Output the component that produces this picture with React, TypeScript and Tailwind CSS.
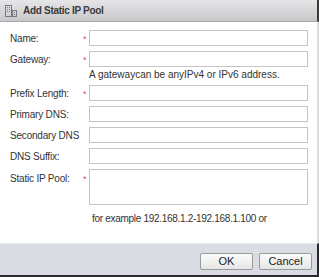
const rows = [
  { label: "Name:", required: true },
  { label: "Gateway:", required: true, hint: "A gatewaycan be anyIPv4 or IPv6 address." },
  { label: "Prefix Length:", required: true },
  { label: "Primary DNS:" },
  { label: "Secondary DNS" },
  { label: "DNS Suffix:" },
]

function PoolIcon() {
  return (
    <svg width="12" height="12" viewBox="0 0 12 12" className="shrink-0">
      <rect x="0.5" y="0.5" width="6" height="11" fill="none" stroke="#747a86" />
      <rect x="2" y="2" width="1" height="1" fill="#747a86" />
      <rect x="4" y="2" width="1" height="1" fill="#747a86" />
      <rect x="2" y="4" width="1" height="1" fill="#747a86" />
      <rect x="4" y="4" width="1" height="1" fill="#747a86" />
      <rect x="2" y="6" width="1" height="1" fill="#747a86" />
      <rect x="4" y="6" width="1" height="1" fill="#747a86" />
      <rect x="7.5" y="5.5" width="4" height="6" fill="none" stroke="#747a86" />
      <rect x="9" y="7" width="1" height="1" fill="#747a86" />
      <rect x="9" y="9" width="1" height="1" fill="#747a86" />
    </svg>
  )
}

function Star({ show, top }: { show?: boolean; top?: boolean }) {
  return (
    <span
      className={`w-[6px] shrink-0 text-[9px] leading-[9px] text-[#e05050] ${top ? "mt-[6px] self-start" : "mt-[3px]"}`}
    >
      {show ? "*" : ""}
    </span>
  )
}

export default function App() {
  return (
    <div
      className="flex h-[277px] w-[319px] flex-col bg-white text-[#333]"
      style={{ fontFamily: '"Liberation Sans", Arial, sans-serif' }}
    >
      <div className="flex h-[22px] shrink-0 items-center gap-[6px] border-b border-r-2 border-b-[#a8a8aa] border-r-[#3a3a3a] bg-gradient-to-b from-[#e6e6e8] to-[#c8c8ca] pl-[5px]">
        <PoolIcon />
        <span className="text-[10px] font-bold tracking-[-0.3px] text-[#3a3a3a]">Add Static IP Pool</span>
      </div>

      <div className="flex flex-1 flex-col border-r-2 border-r-[#dcdcdc] pl-[10px] pr-[9px] pt-[8px] text-[10px] tracking-[-0.2px]">
        <div className="flex flex-col gap-[5px]">
          {rows.map((r) => (
            <div key={r.label}>
              <div className="flex h-[16px] items-center">
                <span className="w-[73px] shrink-0">{r.label}</span>
                <Star show={r.required} />
                <div className="h-[16px] flex-1 border border-[#c4c4c4] bg-white" />
              </div>
              {r.hint ? (
                <div className="mb-[-1px] ml-[79px] mt-[1px] h-[13px] leading-[13px] tracking-normal">{r.hint}</div>
              ) : null}
            </div>
          ))}
          <div className="flex h-[36px]">
            <span className="mt-[2px] w-[73px] shrink-0">Static IP Pool:</span>
            <Star show top />
            <div className="h-[36px] flex-1 border border-[#c4c4c4] bg-white" />
          </div>
        </div>
        <div className="ml-[82px] mt-[7px] h-[13px] leading-[13px] tracking-[-0.3px]">
          for example 192.168.1.2-192.168.1.100 or
        </div>
      </div>

      <div className="flex h-[34px] shrink-0 items-start justify-end gap-[6px] border-b-2 border-r-2 border-[#2a2a2a] border-t border-t-[#e4e7eb] bg-[#d9dde3] pr-[5px] pt-[9px]">
        <button className="h-[17px] w-[53px] rounded-[2px] border border-[#9a9a9a] bg-gradient-to-b from-[#fcfcfc] to-[#e6e6e6] text-[11px] leading-[15px] text-[#222]">
          OK
        </button>
        <button className="h-[17px] w-[53px] rounded-[2px] border border-[#9a9a9a] bg-gradient-to-b from-[#fcfcfc] to-[#e6e6e6] text-[11px] leading-[15px] text-[#222]">
          Cancel
        </button>
      </div>
    </div>
  )
}
